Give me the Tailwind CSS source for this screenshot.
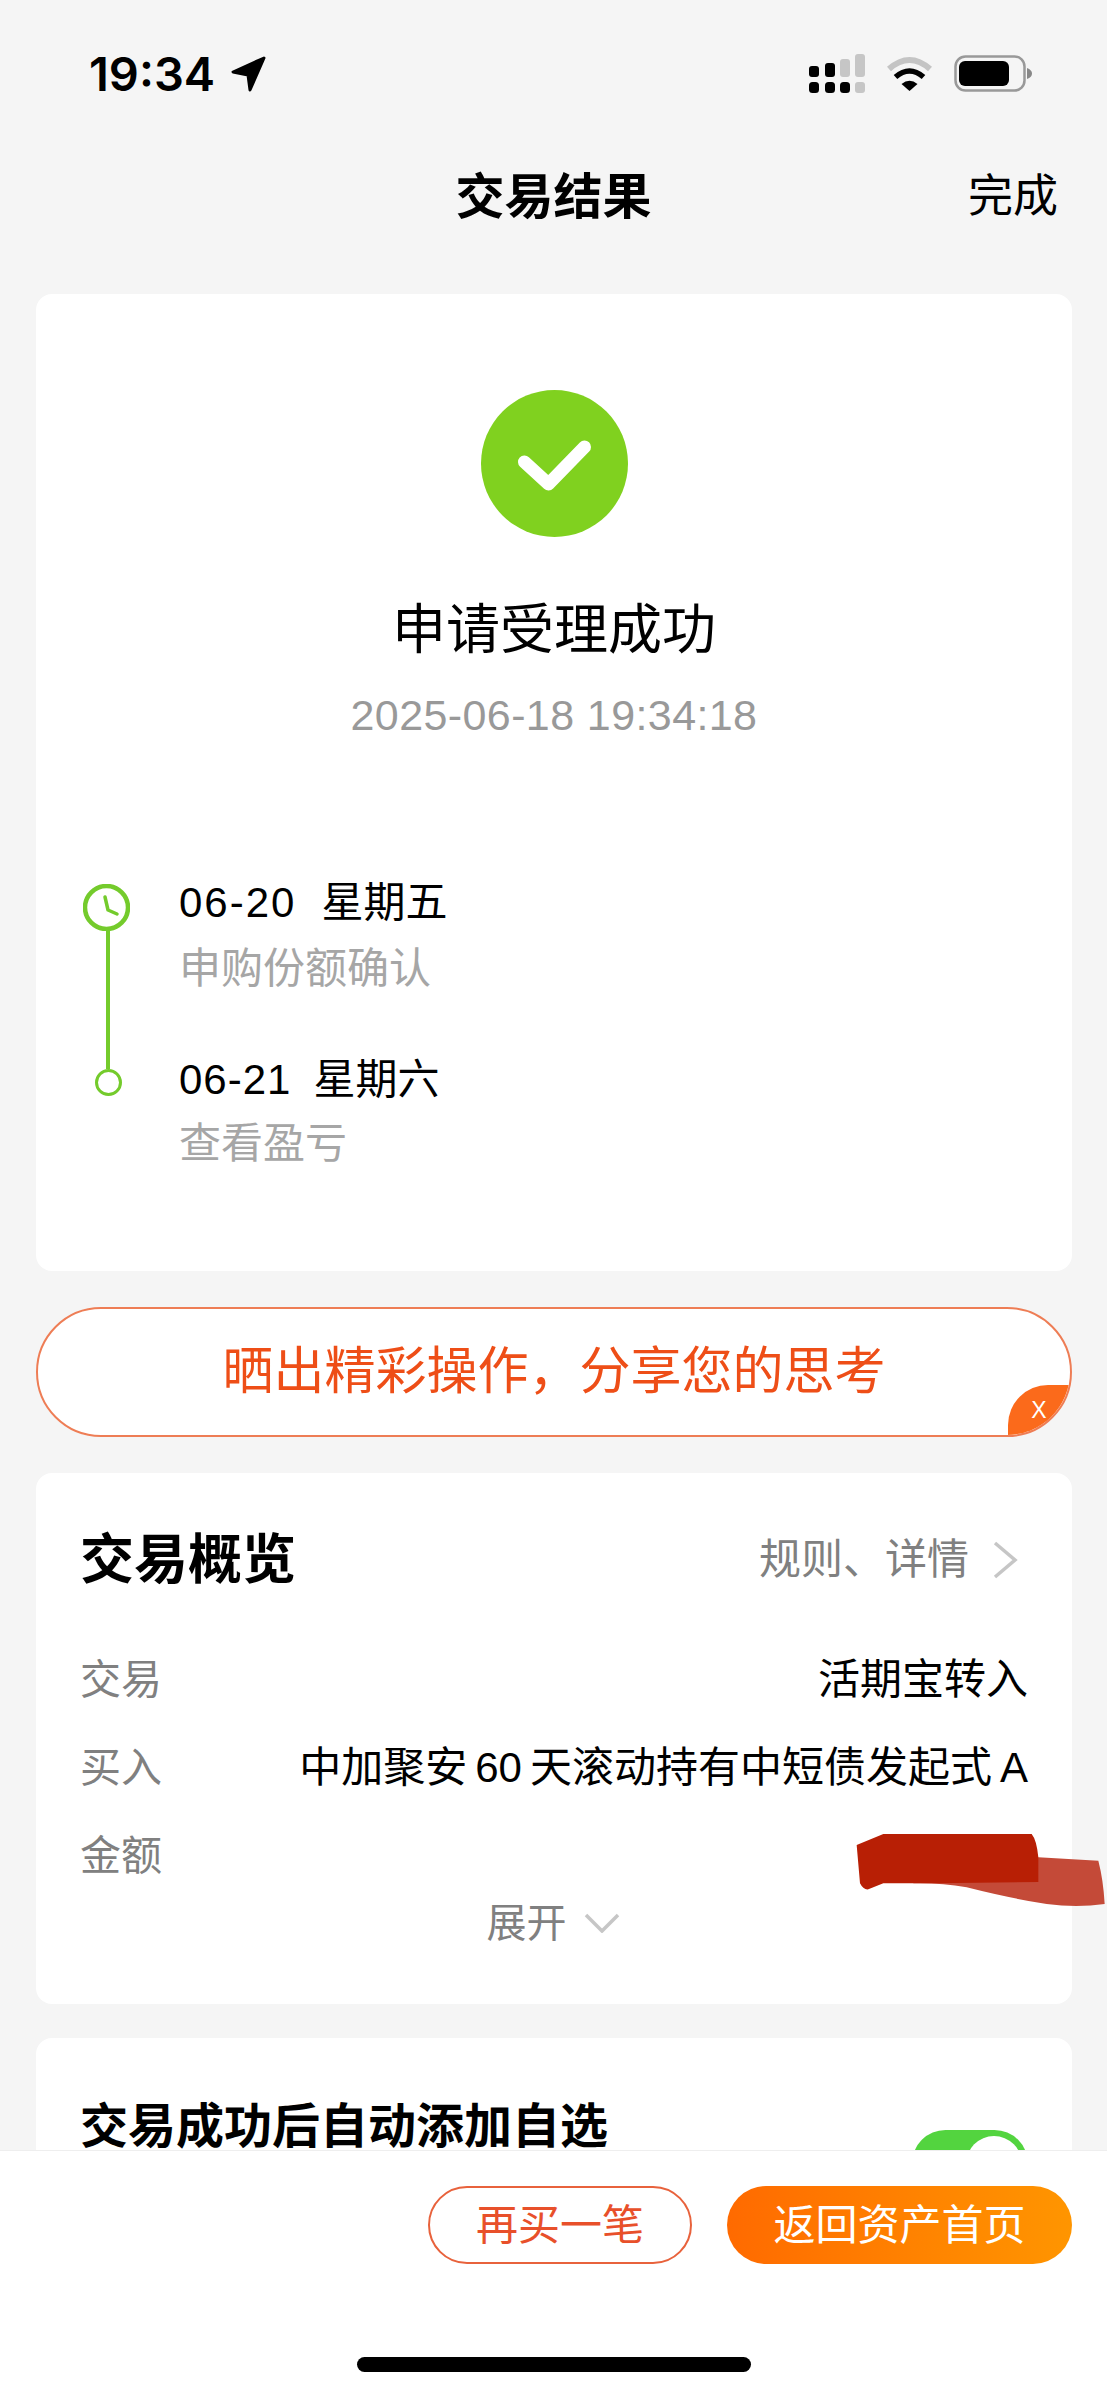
<!DOCTYPE html>
<html lang="zh-CN">
<head>
  <meta charset="UTF-8" />
  <meta name="viewport" content="width=device-width, initial-scale=1.0" />
  <title>交易结果</title>
  <script src="https://cdn.jsdelivr.net/npm/@tailwindcss/browser@4"></script>
</head>
<body class="bg-[#f5f5f5]">
  <div class="relative w-[1107px] h-[2395px] overflow-hidden bg-[#f5f5f5] text-black font-['Liberation_Sans','Noto_Sans_CJK_SC',sans-serif]">

    <!-- status bar -->
    <div class="flex items-center justify-between h-[39px] pl-[89px] pr-[75px] translate-y-[54px]">
      <div class="flex items-center">
        <span class="text-[47px] leading-[39px] font-semibold font-['Inter',sans-serif] w-[141px]">19:34</span>
        <svg class="w-[38px] h-[38px]" viewBox="0 0 38 38">
          <path d="M34 3 L3 17 L18 20 L20 35 Z" fill="#000" stroke="#000" stroke-width="3" stroke-linejoin="round" />
        </svg>
      </div>
      <div class="flex items-center gap-[21px]">
        <svg class="w-[56px] h-[39px]" viewBox="0 0 56 39">
          <rect x="0" y="12" width="10" height="11" rx="3" fill="#000" />
          <rect x="16" y="9" width="10" height="14" rx="3" fill="#000" />
          <rect x="31" y="5" width="10" height="18" rx="3" fill="#c6c6c6" />
          <rect x="46" y="0" width="10" height="23" rx="3" fill="#c6c6c6" />
          <rect x="0" y="28" width="10" height="11" rx="3.5" fill="#000" />
          <rect x="16" y="28" width="10" height="11" rx="3.5" fill="#000" />
          <rect x="31" y="28" width="10" height="11" rx="3.5" fill="#000" />
          <rect x="46" y="28" width="10" height="11" rx="3" fill="#c6c6c6" />
        </svg>
        <svg class="w-[47px] h-[35px]" viewBox="0 0 47 35">
          <path d="M3 13 Q23.5 -5 44 13" fill="none" stroke="#c4c4c4" stroke-width="6" />
          <path d="M9.500 21 Q23.500 9 37.500 21" fill="none" stroke="#000" stroke-width="5.500" />
          <path d="M15.500 28 Q23.500 21.500 31.500 28 L23.500 35 Z" fill="#000" />
        </svg>
        <svg class="w-[78px] h-[37px]" viewBox="0 0 78 37">
          <rect x="1.500" y="1.500" width="69" height="34" rx="10" fill="none" stroke="#999" stroke-width="2.500" />
          <rect x="5" y="6" width="50" height="25" rx="6" fill="#000" />
          <path d="M73 13 Q78 15 78 18.500 Q78 22 73 24 Z" fill="#888" />
        </svg>
      </div>
    </div>

    <!-- nav -->
    <div class="relative h-[60px] mt-[128px] mb-[67px] text-center leading-[60px]">
      <span class="text-[49px] font-bold">交易结果</span>
      <span class="absolute right-[49px] top-0 text-[45px]">完成</span>
    </div>

    <div class="pl-[36px] pr-[35px]">
      <!-- result card -->
      <div class="bg-white rounded-[16px] h-[977px] pt-[96px]">
        <div class="flex justify-center">
          <svg class="w-[147px] h-[147px]" viewBox="0 0 147 147">
            <circle cx="73.500" cy="73.500" r="73.500" fill="#80d11f" />
            <path d="M43.500 72 L67.500 94 L103.500 57" fill="none" stroke="#fff" stroke-width="13" stroke-linecap="round" stroke-linejoin="round" />
          </svg>
        </div>
        <div class="mt-[63px] h-[60px] leading-[60px] text-center text-[54px]">申请受理成功</div>
        <div class="mt-[30px] h-[50px] leading-[50px] text-center text-[43px] tracking-[0.4px] text-[#999999]">2025-06-18 19:34:18</div>

        <!-- timeline -->
        <div class="flex mt-[138px] pl-[47px]">
          <div class="flex flex-col items-center w-[50px] pt-[6px]">
            <svg class="w-[47px] h-[47px] -ml-[3px]" viewBox="0 0 47 47">
              <circle cx="23.500" cy="23.500" r="21.500" fill="none" stroke="#74cb2c" stroke-width="4.500" />
              <path d="M22 13 L25 26 L34 30" fill="none" stroke="#74cb2c" stroke-width="3.500" stroke-linecap="round" stroke-linejoin="round" />
            </svg>
            <div class="w-[4px] h-[138px] bg-[#74cb2c]"></div>
            <div class="w-[27px] h-[27px] rounded-full border-[3px] border-[#74cb2c]"></div>
          </div>
          <div class="ml-[46px]">
            <div class="h-[50px] leading-[50px] flex items-center">
              <span class="text-[42px] tracking-[2px]">06-20</span>
              <span class="text-[42px] ml-[25px]">星期五</span>
            </div>
            <div class="mt-[16px] h-[50px] leading-[50px] text-[42px] text-[#a6a6a6]">申购份额确认</div>
            <div class="mt-[61px] h-[50px] leading-[50px] flex items-center">
              <span class="text-[42px] tracking-[1px]">06-21</span>
              <span class="text-[42px] ml-[22px]">星期六</span>
            </div>
            <div class="mt-[14px] h-[50px] leading-[50px] text-[42px] text-[#a6a6a6]">查看盈亏</div>
          </div>
        </div>
      </div>

      <!-- share banner -->
      <div class="relative mt-[36px] h-[130px] rounded-full overflow-hidden bg-white border-2 border-[#ee7d55] flex items-center justify-center">
        <span class="text-[51px] leading-[60px] text-[#ee4e17]">晒出精彩操作，分享您的思考</span>
        <div class="absolute right-0 bottom-0 w-[62px] h-[50px] rounded-tl-[40px] bg-[#fb6a1b] flex items-center justify-center text-white text-[23px] leading-[50px]">X</div>
      </div>

      <!-- overview card -->
      <div class="mt-[36px] bg-white rounded-[16px] h-[531px] pt-[57px] px-[44px]">
        <div class="flex items-center justify-between h-[60px]">
          <span class="text-[54px] font-bold leading-[60px]">交易概览</span>
          <span class="flex items-center text-[42px] text-[#808080] leading-[60px]">
            规则、详情
            <svg class="w-[25px] h-[38px] ml-[24px] mr-[10px]" viewBox="0 0 25 38">
              <path d="M2 2 L22 19 L2 36" fill="none" stroke="#c6c6c6" stroke-width="3.500" />
            </svg>
          </span>
        </div>
        <div class="mt-[46px] flex justify-between h-[88px] leading-[88px] text-[42px]">
          <span class="text-[41px] text-[#808080]">交易</span>
          <span>活期宝转入</span>
        </div>
        <div class="flex justify-between h-[88px] leading-[88px] text-[42px]">
          <span class="text-[41px] text-[#808080]">买入</span>
          <span>中加聚安<span class="mx-[8px]">60</span>天滚动持有中短债发起式<span class="ml-[8px]">A</span></span>
        </div>
        <div class="flex justify-between h-[88px] leading-[88px]">
          <span class="text-[41px] text-[#808080]">金额</span>
        </div>
        <div class="flex items-center justify-center h-[50px] -mt-[2px] -ml-[2px] text-[40px] leading-[50px] text-[#808080]">
          展开
          <svg class="w-[36px] h-[20px] ml-[17px]" viewBox="0 0 36 20">
            <path d="M2 2 L18 18 L34 2" fill="none" stroke="#c6c6c6" stroke-width="3.500" />
          </svg>
        </div>
      </div>

      <!-- watchlist card, runs under the bottom bar -->
      <div class="mt-[34px] bg-white rounded-[16px] h-[300px] pt-[59px] pl-[44px] pr-[44px] flex justify-between items-start">
        <span class="text-[48px] font-bold leading-[60px]">交易成功后自动添加自选</span>
        <div class="mt-[33px] w-[116px] h-[67px] rounded-full bg-[#53d43f] flex justify-end items-center pr-[6px]">
          <div class="w-[56px] h-[56px] rounded-full bg-white"></div>
        </div>
      </div>
    </div>

    <!-- red scribble over the amount -->
    <svg class="absolute left-[700px] top-[1750px] w-[407px] h-[300px]" viewBox="0 0 1221 900">
      <path class="blur-[1.5px]" d="M640 392 L1015 322 L1195 332 Q1210 390 1214 462 Q1130 474 1040 462 Q930 445 800 412 Q720 398 640 400 Z" fill="#c44a38" />
      <path class="blur-[0.7px]" d="M470 285 L550 252 L995 252 Q1010 270 1015 322 L1015 396 L700 400 L550 400 L505 418 Q490 420 480 400 Z" fill="#b81f05" />
    </svg>

    <!-- bottom bar -->
    <div class="absolute left-0 bottom-0 w-full h-[245px] bg-white border-t border-[#eeeeee]">
      <div class="flex justify-end gap-[35px] pr-[35px] pt-[35px]">
        <div class="w-[264px] h-[78px] rounded-full border-2 border-[#e8623c] flex items-center justify-center text-[42px] text-[#e8502a]">再买一笔</div>
        <div class="w-[345px] h-[78px] rounded-full bg-linear-to-r from-[#ff6a00] to-[#ff9500] flex items-center justify-center text-[42px] text-white">返回资产首页</div>
      </div>
      <div class="absolute left-[357px] bottom-[23px] w-[394px] h-[15px] rounded-full bg-black"></div>
    </div>
  </div>
</body>
</html>
